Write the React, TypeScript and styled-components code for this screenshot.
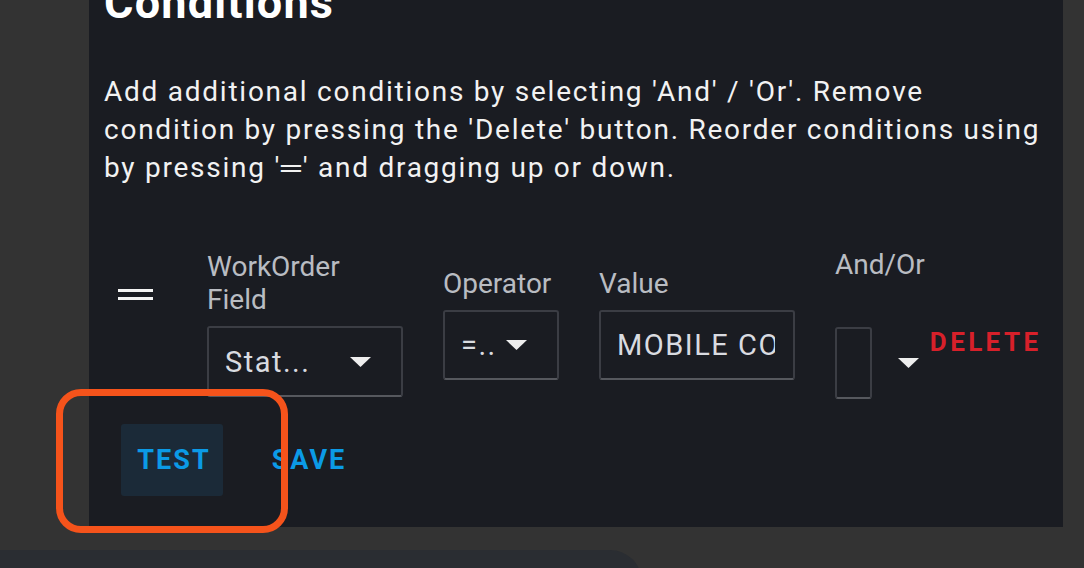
import React from "react";
import styled, { createGlobalStyle } from "styled-components";

const GlobalStyle = createGlobalStyle`
  html, body {
    margin: 0;
    padding: 0;
    background: #333333;
    overflow: hidden;
  }
  body {
    font-family: Roboto, "Liberation Sans", Arial, sans-serif;
    -webkit-font-smoothing: antialiased;
  }
`;

const Page = styled.div`
  position: relative;
  width: 1084px;
  height: 568px;
  overflow: hidden;
  background: #333333;
`;

const Panel = styled.section`
  margin-left: 89px;
  width: 974px;
  height: 527px;
  box-sizing: border-box;
  padding: 0 12px 0 15px;
  background: #1a1c22;
  display: flex;
  flex-direction: column;
`;

const Title = styled.h2`
  margin: -23px 0 0;
  font-size: 45px;
  line-height: 52px;
  font-weight: 700;
  letter-spacing: 1.2px;
  color: #ffffff;
`;

const Description = styled.p`
  margin: 44px 0 0;
  font-size: 28px;
  line-height: 38px;
  letter-spacing: 1.75px;
  color: #f2f2f2;
`;

const ConditionRow = styled.div`
  margin-top: 61px;
  display: flex;
  align-items: center;
  gap: 40px;
`;

const DragHandle = styled.div`
  width: 35px;
  margin: 0 14px 58px;
  display: flex;
  flex-direction: column;
  gap: 5px;
`;

const HandleBar = styled.span`
  display: block;
  height: 3px;
  background: #f4f4f4;
`;

const Field = styled.div<{ $width: number }>`
  width: ${(p) => p.$width}px;
  display: flex;
  flex-direction: column;
`;

const Label = styled.label`
  display: block;
  font-size: 28px;
  line-height: 33px;
  color: #b9bcc2;
  margin-bottom: 10px;
`;

const Box = styled.div<{ $height: number }>`
  box-sizing: border-box;
  height: ${(p) => p.$height}px;
  border: 2px solid #3b3d44;
  border-bottom-color: #56585e;
  border-radius: 3px;
  display: flex;
  align-items: center;
  justify-content: space-between;
  padding: 0 30px 0 16px;
  font-size: 29px;
  letter-spacing: 1.5px;
  color: #d9dbe0;
  overflow: hidden;
  white-space: nowrap;
`;

const ClipText = styled.span`
  display: block;
  overflow: hidden;
  white-space: nowrap;
  flex: 1;
  margin-right: -12px;
`;

const AndOrGroup = styled.div`
  display: flex;
  align-items: center;
  gap: 5px;
`;

const AndOrField = styled.div`
  display: flex;
  flex-direction: column;
  gap: 46px;
`;

const AndOrLabel = styled.label`
  font-size: 28px;
  line-height: 33px;
  color: #b9bcc2;
`;

const AndOrSelect = styled.div`
  display: flex;
  align-items: center;
  gap: 26px;
`;

const EmptyBox = styled.div`
  box-sizing: border-box;
  width: 37px;
  height: 72px;
  border: 2px solid #3b3d44;
  border-bottom-color: #56585e;
  border-radius: 3px;
`;

const DeleteButton = styled.button`
  border: none;
  background: none;
  padding: 0;
  margin-top: 36px;
  font-family: inherit;
  font-size: 26px;
  font-weight: 700;
  letter-spacing: 3.4px;
  color: #d7202a;
  text-transform: uppercase;
`;

const Actions = styled.div`
  margin-top: 25px;
  padding-left: 17px;
  display: flex;
  gap: 33px;
`;

const ActionButton = styled.button<{ $active?: boolean }>`
  width: 102px;
  height: 72px;
  border: none;
  border-radius: 3px;
  background: ${(p) => (p.$active ? "#1b2a38" : "transparent")};
  font-family: inherit;
  font-size: 27px;
  font-weight: 700;
  letter-spacing: 2px;
  color: #0b9ae6;
  text-transform: uppercase;
  padding: 0 0 0 4px;
`;

const BottomBar = styled.div`
  margin-top: 23px;
  width: 642px;
  height: 60px;
  background: #2a2d32;
  border-top-right-radius: 32px;
`;

const Highlight = styled.div`
  position: absolute;
  left: 56px;
  top: 389px;
  width: 232px;
  height: 144px;
  box-sizing: border-box;
  border: 7px solid #f5531b;
  border-radius: 25px;
  pointer-events: none;
`;

const Caret = () => (
  <svg width="21" height="10" viewBox="0 0 21 10" aria-hidden="true">
    <polygon points="0,0 21,0 10.5,10" fill="#eeeeee" />
  </svg>
);

export default function App() {
  return (
    <Page>
      <GlobalStyle />
      <Panel>
        <Title>Conditions</Title>
        <Description>
          Add additional conditions by selecting 'And' / 'Or'. Remove condition
          by pressing the 'Delete' button. Reorder conditions using by pressing
          '═' and dragging up or down.
        </Description>
        <ConditionRow>
          <DragHandle>
            <HandleBar />
            <HandleBar />
          </DragHandle>
          <Field $width={196}>
            <Label>
              WorkOrder
              <br />
              Field
            </Label>
            <Box $height={71}>
              <span>Stat...</span>
              <Caret />
            </Box>
          </Field>
          <Field $width={116}>
            <Label>Operator</Label>
            <Box $height={70}>
              <span>=..</span>
              <Caret />
            </Box>
          </Field>
          <Field $width={196}>
            <Label>Value</Label>
            <Box $height={70}>
              <ClipText>MOBILE COMMUNICATION</ClipText>
            </Box>
          </Field>
          <AndOrGroup>
            <AndOrField>
              <AndOrLabel>And/Or</AndOrLabel>
              <AndOrSelect>
                <EmptyBox />
                <Caret />
              </AndOrSelect>
            </AndOrField>
            <DeleteButton>Delete</DeleteButton>
          </AndOrGroup>
        </ConditionRow>
        <Actions>
          <ActionButton $active>Test</ActionButton>
          <ActionButton>Save</ActionButton>
        </Actions>
      </Panel>
      <BottomBar />
      <Highlight />
    </Page>
  );
}
